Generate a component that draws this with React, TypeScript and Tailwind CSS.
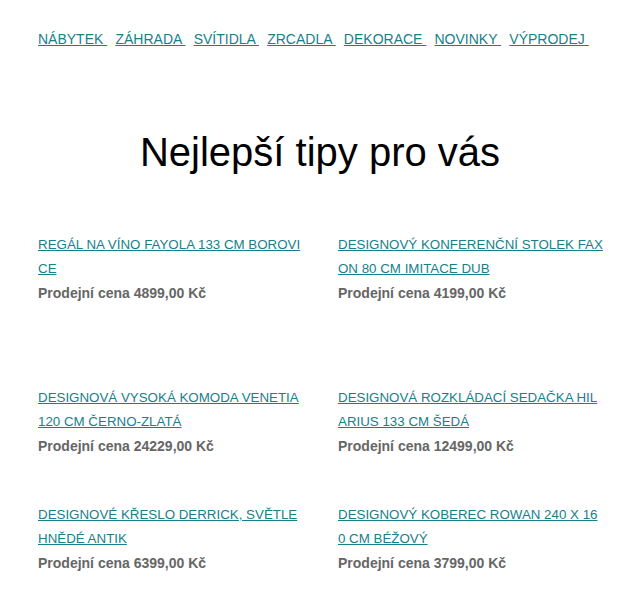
import React from "react";

const nav = ["NÁBYTEK", "ZÁHRADA", "SVÍTIDLA", "ZRCADLA", "DEKORACE", "NOVINKY", "VÝPRODEJ"];

const products = [
  { name: "REGÁL NA VÍNO FAYOLA 133 CM BOROVICE", price: "4899,00" },
  { name: "DESIGNOVÝ KONFERENČNÍ STOLEK FAXON 80 CM IMITACE DUB", price: "4199,00" },
  { name: "DESIGNOVÁ VYSOKÁ KOMODA VENETIA 120 CM ČERNO-ZLATÁ", price: "24229,00" },
  { name: "DESIGNOVÁ ROZKLÁDACÍ SEDAČKA HILARIUS 133 CM ŠEDÁ", price: "12499,00" },
  { name: "DESIGNOVÉ KŘESLO DERRICK, SVĚTLE HNĚDÉ ANTIK", price: "6399,00" },
  { name: "DESIGNOVÝ KOBEREC ROWAN 240 X 160 CM BÉŽOVÝ", price: "3799,00" },
];

function Product({ p }: { p: { name: string; price: string } }) {
  return (
    <div className="w-[266.5px]">
      <a href="#" className="text-[13.33px] leading-[24px] text-[#17808a] underline break-all block">
        {p.name}
      </a>
      <div className="text-[14px] leading-[24px] font-bold text-[#666666]">
        Prodejní cena {p.price} Kč
      </div>
    </div>
  );
}

export default function App() {
  return (
    <div className="bg-white min-h-[600px] px-[38px] pt-[29px]" style={{ fontFamily: '"Liberation Sans", Arial, sans-serif' }}>
      <nav className="text-[14px] leading-[20px]">
        {nav.map((n, i) => (
          <React.Fragment key={n}>
            <a href="#" className="text-[#17808a] underline whitespace-pre mr-[4.3px]">{n + " "}</a>
            {i < nav.length - 1 ? " " : ""}
          </React.Fragment>
        ))}
      </nav>
      <h1 className="text-[40px] leading-[48px] text-black text-center mt-[79px] font-normal">
        Nejlepší tipy pro vás
      </h1>
      <div className="grid grid-cols-[300px_266.5px] mt-[57px]">
        <div className="mb-[81px]"><Product p={products[0]} /></div>
        <div className="mb-[81px]"><Product p={products[1]} /></div>
        <div className="mb-[45px]"><Product p={products[2]} /></div>
        <div className="mb-[45px]"><Product p={products[3]} /></div>
        <div><Product p={products[4]} /></div>
        <div><Product p={products[5]} /></div>
      </div>
    </div>
  );
}
